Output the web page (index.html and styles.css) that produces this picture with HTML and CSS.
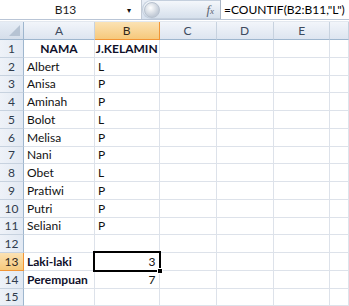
FILE: index.html
```html
<!DOCTYPE html>
<html lang="en">
<head>
    <meta charset="UTF-8">
    <title>COUNTIF</title>
    <link rel="stylesheet" href="styles.css">
</head>
<body>
    <div class="formula-bar">
        <div class="name-box">
            <span class="cell-ref">B13</span>
            <span class="drop">&#9662;</span>
        </div>
        <div class="fx-panel">
            <span class="dimple"></span>
            <span class="fx"><i>f</i><small>x</small></span>
        </div>
        <div class="formula">=COUNTIF(B2:B11,"L")</div>
    </div>

    <div class="sheet">
        <div class="corner"><span class="tri"></span></div>
        <div class="col-head">A</div>
        <div class="col-head active">B</div>
        <div class="col-head">C</div>
        <div class="col-head">D</div>
        <div class="col-head">E</div>
        <div class="col-head"></div>

        <div class="row-head">1</div>
        <div class="cell bold center">NAMA</div>
        <div class="cell bold center">J.KELAMIN</div>
        <div class="cell"></div><div class="cell"></div><div class="cell"></div><div class="cell"></div>

        <div class="row-head">2</div>
        <div class="cell">Albert</div><div class="cell">L</div>
        <div class="cell"></div><div class="cell"></div><div class="cell"></div><div class="cell"></div>

        <div class="row-head">3</div>
        <div class="cell">Anisa</div><div class="cell">P</div>
        <div class="cell"></div><div class="cell"></div><div class="cell"></div><div class="cell"></div>

        <div class="row-head">4</div>
        <div class="cell">Aminah</div><div class="cell">P</div>
        <div class="cell"></div><div class="cell"></div><div class="cell"></div><div class="cell"></div>

        <div class="row-head">5</div>
        <div class="cell">Bolot</div><div class="cell">L</div>
        <div class="cell"></div><div class="cell"></div><div class="cell"></div><div class="cell"></div>

        <div class="row-head">6</div>
        <div class="cell">Melisa</div><div class="cell">P</div>
        <div class="cell"></div><div class="cell"></div><div class="cell"></div><div class="cell"></div>

        <div class="row-head">7</div>
        <div class="cell">Nani</div><div class="cell">P</div>
        <div class="cell"></div><div class="cell"></div><div class="cell"></div><div class="cell"></div>

        <div class="row-head">8</div>
        <div class="cell">Obet</div><div class="cell">L</div>
        <div class="cell"></div><div class="cell"></div><div class="cell"></div><div class="cell"></div>

        <div class="row-head">9</div>
        <div class="cell">Pratiwi</div><div class="cell">P</div>
        <div class="cell"></div><div class="cell"></div><div class="cell"></div><div class="cell"></div>

        <div class="row-head">10</div>
        <div class="cell">Putri</div><div class="cell">P</div>
        <div class="cell"></div><div class="cell"></div><div class="cell"></div><div class="cell"></div>

        <div class="row-head">11</div>
        <div class="cell">Seliani</div><div class="cell">P</div>
        <div class="cell"></div><div class="cell"></div><div class="cell"></div><div class="cell"></div>

        <div class="row-head">12</div>
        <div class="cell"></div><div class="cell"></div>
        <div class="cell"></div><div class="cell"></div><div class="cell"></div><div class="cell"></div>

        <div class="row-head active">13</div>
        <div class="cell bold">Laki-laki</div>
        <div class="cell right selected">3<span class="handle"></span></div>
        <div class="cell"></div><div class="cell"></div><div class="cell"></div><div class="cell"></div>

        <div class="row-head">14</div>
        <div class="cell bold">Perempuan</div>
        <div class="cell right">7</div>
        <div class="cell"></div><div class="cell"></div><div class="cell"></div><div class="cell"></div>

        <div class="row-head">15</div>
        <div class="cell"></div><div class="cell"></div>
        <div class="cell"></div><div class="cell"></div><div class="cell"></div><div class="cell"></div>
    </div>
</body>
</html>
```

FILE: styles.css
```css
* {
    box-sizing: border-box;
}

html, body {
    margin: 0;
    padding: 0;
    width: 100%;
    height: 100vh;
    overflow: hidden;
    background-color: #ffffff;
    font-family: 'Lato', 'Liberation Sans', sans-serif;
    font-size: 12px;
    color: #000000;
}

/* formula bar */

.formula-bar {
    display: flex;
    height: 20px;
    background: linear-gradient(#e9eef6, #d7e1ee);
    border-bottom: 1px solid #b9c5d6;
}

.name-box {
    width: 142px;
    background-color: #ffffff;
    border-right: 1px solid #c3cbd6;
    display: flex;
    align-items: center;
    position: relative;
}

.cell-ref {
    flex: 1;
    text-align: center;
    padding-left: 4px;
    color: #1d1d1d;
}

.drop {
    font-size: 8px;
    width: 14px;
    color: #111;
}

.fx-panel {
    width: 78px;
    display: flex;
    align-items: center;
    justify-content: space-between;
    padding: 0 6px 0 1px;
    border-radius: 10px 0 0 10px;
    background: linear-gradient(#f4f7fb, #d6e0ec);
    border: 1px solid #c4cfdd;
    border-right: none;
}

.dimple {
    width: 16px;
    height: 16px;
    border-radius: 50%;
    background: radial-gradient(circle at 40% 35%, #ffffff, #c1cad6 70%);
    border: 1px solid #b8c2cf;
}

.fx {
    font-family: 'Liberation Serif', serif;
    color: #5c6470;
    font-size: 13px;
}

.fx small {
    font-size: 9px;
    font-style: italic;
}

.formula {
    flex: 1;
    background-color: #ffffff;
    border-left: 1px solid #aab6c6;
    padding-left: 3px;
    display: flex;
    align-items: center;
    white-space: nowrap;
    overflow: hidden;
}

/* sheet grid */

.sheet {
    margin-top: 1px;
    border-top: 1px solid #e3e8ef;
    display: grid;
    grid-template-columns: 24px 71px 64.5px 57px 57.3px 56.7px 1fr;
    grid-template-rows: 18px;
    grid-auto-rows: 17.75px;
}

.corner {
    background: linear-gradient(#e6edf6, #d5deea);
    border-right: 1px solid #9eb6ce;
    border-bottom: 1px solid #9eb6ce;
    position: relative;
}

.tri {
    position: absolute;
    right: 3px;
    bottom: 3px;
    width: 0;
    height: 0;
    border-left: 11px solid transparent;
    border-bottom: 11px solid #b6c3d3;
}

.col-head {
    background: linear-gradient(#f2f5fa, #dde5f0);
    border-right: 1px solid #c7d2df;
    border-bottom: 1px solid #9eb6ce;
    display: flex;
    align-items: center;
    justify-content: center;
    color: #3d4b5e;
}

.col-head.active,
.row-head.active {
    background: linear-gradient(#fbe2b4, #f6c97c);
    border-bottom-color: #f29536;
    border-right-color: #f29536;
    color: #30281c;
}

.row-head {
    background: linear-gradient(90deg, #eef2f8, #e2e9f3);
    border-right: 1px solid #9eb6ce;
    border-bottom: 1px solid #c7d2df;
    display: flex;
    align-items: center;
    justify-content: center;
    color: #2f3b4c;
}

.cell {
    border-right: 1px solid #dde2ea;
    border-bottom: 1px solid #dde2ea;
    display: flex;
    align-items: center;
    padding: 0 3px;
    white-space: nowrap;
    color: #111111;
}

.cell.bold {
    font-weight: bold;
    color: #10102a;
}

.cell.center {
    justify-content: center;
}

.cell.right {
    justify-content: flex-end;
}

.selected {
    position: relative;
}

.selected::after {
    content: "";
    position: absolute;
    left: -2px;
    top: -2px;
    right: -2px;
    bottom: -2px;
    border: 2px solid #000000;
}

.handle {
    position: absolute;
    right: -4px;
    bottom: -4px;
    width: 6px;
    height: 6px;
    background-color: #000000;
    border: 1px solid #ffffff;
    z-index: 2;
}
```
